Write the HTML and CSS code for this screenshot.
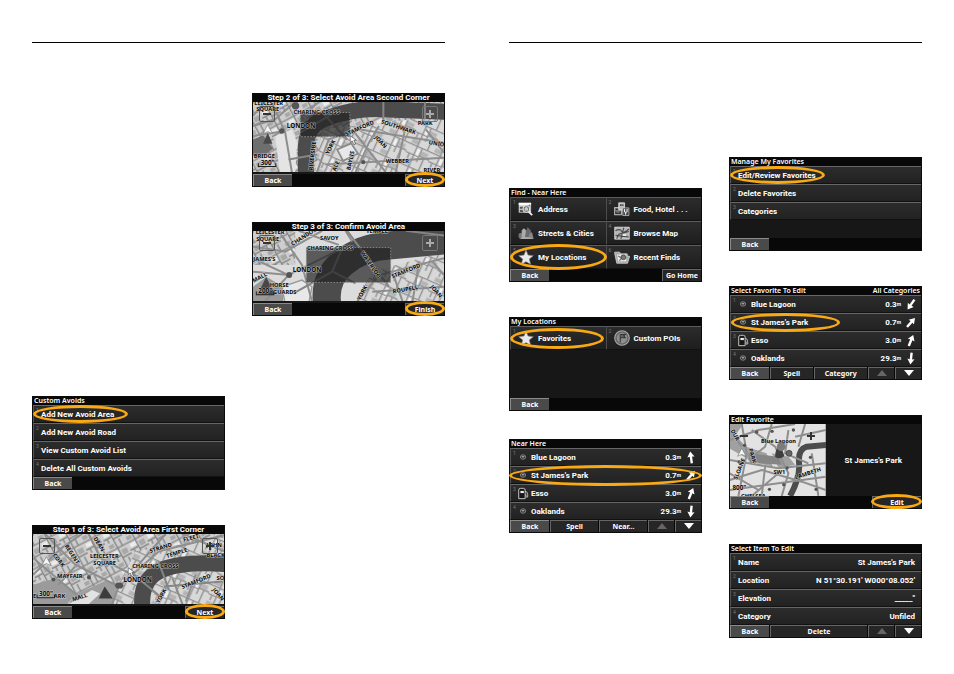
FILE: index.html
```html
<!DOCTYPE html>
<html lang="en">

<head>
    <meta charset="UTF-8">
    <meta name="viewport" content="width=device-width, initial-scale=1.0">
    <title>Custom Avoids and Favorites</title>
    <link rel="stylesheet" href="styles.css">
</head>

<body>

    <!-- shared map fills and icons -->
    <svg class="defs" aria-hidden="true">
        <defs>
            <pattern id="streets" width="74" height="66" patternUnits="userSpaceOnUse" patternTransform="rotate(24)">
                <rect width="74" height="66" fill="#d8d8d8" />
                <path d="M4 4h20v14H4zM44 30h22v12H44z" fill="#b5b5b5" />
                <path d="M28 28h12v26H28z" fill="#f0f0f0" />
                <path d="M0 22H74M0 50H42M26 0V66M42 22V66M58 0V22M12 50V66M42 46H74M58 46V66" fill="none" stroke="#8f8f8f" stroke-width="4" />
            </pattern>
            <pattern id="streets2" width="58" height="62" patternUnits="userSpaceOnUse" patternTransform="rotate(-28)">
                <rect width="58" height="62" fill="#cecece" />
                <path d="M6 6h16v12H6zM34 34h18v16H34z" fill="#a8a8a8" />
                <path d="M6 30h18v12H6z" fill="#ececec" />
                <path d="M0 24H58M28 0V62M0 48H28M44 0V24M28 56H58M12 48V62" fill="none" stroke="#858585" stroke-width="4" />
            </pattern>
        </defs>

        <symbol id="star" viewBox="0 0 24 24">
            <path d="M12 1l3 8 8 1-6 5 2 8-7-4-7 4 2-8-6-5 8-1z" fill="#e9e9e9" stroke="#777" />
        </symbol>
        <symbol id="pin" viewBox="0 0 18 18">
            <ellipse cx="9" cy="9" rx="6" ry="5" fill="#333" stroke="#888" stroke-width="2" />
            <path d="M6 8h6M9 7v4" stroke="#aaa" stroke-width="2" />
        </symbol>
        <symbol id="fuel" viewBox="0 0 28 28">
            <path d="M4 26V6q0-4 4-4h7q4 0 4 4v20z" fill="#161616" stroke="#ddd" stroke-width="2" />
            <path d="M8 8h8v5H8z" fill="#eee" />
            <path d="M19 9q6 0 6 8v5q-3 3-4-2v-4" fill="none" stroke="#ccc" stroke-width="2" />
        </symbol>
        <symbol id="arrow" viewBox="0 0 30 30">
            <path d="M15 0l9 14-6-1v17h-6V13l-6 1z" fill="#fff" />
        </symbol>
        <symbol id="up" viewBox="0 0 20 12">
            <path d="M10 0l10 12H0z" fill="#666" />
        </symbol>
        <symbol id="down" viewBox="0 0 20 12">
            <path d="M0 0h20L10 12z" fill="#fff" />
        </symbol>
        <symbol id="here" viewBox="0 0 40 60">
            <path d="M20 1L34 28 20 22 6 28z" fill="#f5f5f5" stroke="#777" stroke-width="2" />
            <path d="M20 26L34 58H6z" fill="#484848" />
        </symbol>
        <symbol id="north" viewBox="0 0 40 30">
            <path d="M20 1L34 28 20 22 6 28z" fill="#f5f5f5" stroke="#777" stroke-width="2" />
        </symbol>
        <symbol id="cursor" viewBox="0 0 24 30">
            <path d="M2 1v21l6-5 5 11 5-2-5-11h8z" fill="#fff" stroke="#444" stroke-width="2" />
        </symbol>

        <symbol id="address" viewBox="0 0 44 40">
            <path d="M2 3h34v27H2z" fill="#d5d5d5" />
            <path d="M2 3h34v6H2z" fill="#fff" />
            <path d="M5 14h9v5H5zM5 22h12v6H5z" fill="#555" />
            <path d="M20 12l14-5v19z" fill="#8b8b8b" />
            <path d="M29 27l10 10" stroke="#eee" stroke-width="5" />
            <circle cx="23" cy="20" r="9" fill="#666" stroke="#ddd" stroke-width="3" />
            <path d="M18 18l5-4 5 4v7H18z" fill="#c9c9c9" />
        </symbol>
        <symbol id="food" viewBox="0 0 44 40">
            <path d="M1 16h20v20H1z" fill="#777" stroke="#ddd" stroke-width="2" />
            <path d="M5 21h12M5 27v5h12v-8" fill="none" stroke="#333" stroke-width="3" />
            <path d="M13 3h16v20H13z" fill="#bbb" stroke="#eee" stroke-width="2" />
            <path d="M17 7h4v5h-4zM23 7h3v5h-3z" fill="#333" />
            <path d="M24 17h17v21H24z" fill="#444" stroke="#ccc" stroke-width="2" />
            <path d="M29 20v7q4 4 7 0v-7M32 28v8" fill="none" stroke="#eee" stroke-width="3" />
        </symbol>
        <symbol id="cities" viewBox="0 0 48 40">
            <path d="M2 34V22l6-3 5 4v13z" fill="#777" />
            <path d="M11 37V12l7-6 6 6v25z" fill="#aaa" />
            <path d="M20 38l4-24 5-11 9 9 3 26z" fill="#6a6a6a" />
            <path d="M30 38l5-17 7-3 5 20z" fill="#888" />
            <path d="M3 38q20-12 43 0z" fill="#aaa" />
        </symbol>
        <symbol id="map" viewBox="0 0 44 38">
            <path d="M2 3h40v33H2z" fill="#b5b5b5" stroke="#eee" stroke-width="2" />
            <path d="M4 13q12-7 17 1t20-6M8 35q1-13 12-15t21-5M27 4l-8 31M4 25l37 5" fill="none" stroke="#4a4a4a" stroke-width="3" />
            <path d="M24 22h9v5h-9z" fill="#eee" />
        </symbol>
        <symbol id="folder" viewBox="0 0 46 40">
            <path d="M2 6h14l4 5h18v6l7 1-6 20H8L2 10z" fill="#aaa" stroke="#e5e5e5" stroke-width="2" />
            <path d="M9 13h26v19H12z" fill="#eee" />
            <path d="M12 17q7 7 10 2t11 0M16 31q2-8 16-9" fill="none" stroke="#666" stroke-width="3" />
            <circle cx="27" cy="21" r="7" fill="#777" stroke="#333" stroke-width="2" />
        </symbol>
        <symbol id="poi" viewBox="0 0 46 46">
            <circle cx="23" cy="23" r="21" fill="#666" stroke="#aaa" stroke-width="3" />
            <circle cx="23" cy="23" r="15" fill="#8f8f8f" />
            <path d="M18 36V12M19 13h13l-4 4 4 5H19" fill="#666" stroke="#333" stroke-width="3" />
        </symbol>
    </svg>

    <main class="spread">

        <section class="page">
            <div class="column column-low">

                <article class="device">
                    <h2>Custom Avoids</h2>
                    <ul class="list">
                        <li><button class="row"><sup>1</sup>Add New Avoid Area</button><span class="ring ring-area"></span></li>
                        <li><button class="row"><sup>2</sup>Add New Avoid Road</button></li>
                        <li><button class="row"><sup>3</sup>View Custom Avoid List</button></li>
                        <li><button class="row"><sup>4</sup>Delete All Custom Avoids</button></li>
                    </ul>
                    <footer><button class="back">Back</button></footer>
                </article>

                <article class="device">
                    <h2 class="center">Step 1 of 3: Select Avoid Area First Corner</h2>
                    <div class="screen">
                        <svg class="map" viewBox="24 48 570 210" preserveAspectRatio="xMidYMid slice">
                            <path d="M24 48H594V258H24z" fill="url(#streets2)" />
                            <path d="M330 100L594 60V258H250z" fill="url(#streets)" />
                            <path d="M24 200l70-20 60 50-30 28H24z" fill="#9b9b9b" />
                            <path d="M150 230l90-42 35 12-10 58H130z" fill="#9e9e9e" />
                            <path d="M130 258l70-42 24 10-34 32z" fill="#e2e2e2" />
                            <path class="river" d="M350 262Q345 180 410 155Q470 130 600 138" />
                            <path class="road" d="M24 170L110 90 170 48M60 48L150 140 280 205 400 100 594 52M190 48L225 120 310 165M24 120L160 235M280 205L260 258M420 48L330 150M470 48L594 100M440 180L470 258M510 170L480 250M150 145L100 200" />
                            <path class="bridge" d="M325 170L410 240M398 130L430 215M415 205L590 190" />
                            <circle class="stop" cx="85" cy="184" r="6" /><circle class="stop" cx="191" cy="178" r="6" />
                            <path d="M273 194h16l6 8-6 9h-16l-5-9z" fill="#555" />
                            <use href="#north" x="44" y="112" width="40" height="36" />
                            <path d="M238 205l24 36h-42z" fill="#3c3c3c" />
                            <text x="194" y="121">LEICESTER</text>
                            <text x="204" y="140">SQUARE</text>
                            <text x="320" y="151">CHARING CROSS</text>
                            <text x="96" y="181">MAYFAIR</text>
                            <text class="city" x="294" y="193">LONDON</text>
                            <text transform="translate(374 105) rotate(-17)">STRAND</text>
                            <text transform="translate(424 120) rotate(-17)">TEMPLE</text>
                            <text transform="translate(474 72) rotate(-15)">FLEET</text>
                            <text x="542" y="86">JOHN</text>
                            <text x="542" y="118">BLACKFRIARS</text>
                            <text transform="translate(118 84) rotate(57)">REGENT</text>
                            <text transform="translate(82 112) rotate(52)">CORK</text>
                            <text transform="translate(204 62) rotate(58)">DEAN</text>
                            <text transform="translate(470 213) rotate(-22)">STAMFORD</text>
                            <text x="572" y="186">SOUTH</text>
                            <text transform="translate(558 216) rotate(48)">JOAN</text>
                            <text transform="translate(143 250) rotate(-18)">MALL</text>
                            <text x="24" y="241">E</text><text x="86" y="241">ARK</text>
                            <text transform="translate(400 256) rotate(-60)">YORK</text>
                            <use href="#cursor" x="306" y="148" width="24" height="30" />
                            <path class="scale" d="M36 229v10h52v-10" />
                            <text class="city" x="42" y="234">300"</text>
                        </svg>
                        <button class="zoom zoom-out" aria-label="Zoom out"></button>
                        <button class="zoom zoom-in" aria-label="Zoom in"></button>
                    </div>
                    <footer><button class="back">Back</button><button class="go">Next</button><span class="ring ring-go"></span></footer>
                </article>

            </div>
            <div class="column column-top">

                <article class="device">
                    <h2 class="center">Step 2 of 3: Select Avoid Area Second Corner</h2>
                    <div class="screen">
                        <svg class="map" viewBox="24 48 570 210" preserveAspectRatio="xMidYMid slice">
                            <path d="M24 48H594V258H24z" fill="url(#streets2)" />
                            <path d="M230 130L594 90V258H210z" fill="url(#streets)" />
                            <path d="M90 150l50-20 16 40-6 88H104z" fill="#e4e4e4" />
                            <path d="M24 160l30-12 30 40-34 24-26-4z" fill="#6e6e6e" />
                            <path d="M275 190l42-18 20 30-44 22z" fill="#e8e8e8" stroke="#888" stroke-width="5" />
                            <path class="river" d="M182 262V180Q185 112 250 95Q330 66 410 70L600 78" />
                            <path class="road" d="M24 120L90 100 150 48M80 48L120 140 140 258M120 135L24 150M215 258L250 160 340 130 594 170M320 130L420 258M400 120L370 170 330 258M480 120L450 258M540 130L594 200M240 235L594 215M60 48L24 90M220 48L175 90" />
                            <path class="bridge" d="M236 85L305 160M413 48V105M130 220L215 205M537 48V100M165 140L260 85" />
                            <path class="avoid" d="M165 80h148v72H165z" />
                            <circle class="stop" cx="110" cy="135" r="8" /><circle class="stop" cx="151" cy="60" r="11" /><circle class="stop" cx="353" cy="228" r="6" />
                            <use href="#here" x="48" y="115" width="40" height="60" />
                            <text x="28" y="57">LEICESTER</text>
                            <text x="34" y="75">SQUARE</text>
                            <text x="145" y="84">CHARING CROSS</text>
                            <text class="city" x="125" y="127">LONDON</text>
                            <text transform="translate(202 253) rotate(-83)">RIVERSIDE</text>
                            <text transform="translate(302 151) rotate(-24)">STAMFORD</text>
                            <text transform="translate(405 112) rotate(18)">SOUTHWARK</text>
                            <text transform="translate(386 155) rotate(48)">JOAN</text>
                            <text x="516" y="116">PARK</text>
                            <text transform="translate(250 206) rotate(-63)">YORK</text>
                            <text transform="translate(314 253) rotate(-77)">BAYLIS</text>
                            <text transform="translate(270 256) rotate(-65)">ALE</text>
                            <text x="420" y="232">WEBBER</text>
                            <text x="533" y="256">RIVER</text>
                            <text transform="translate(548 175) rotate(8)">UNION</text>
                            <text x="26" y="217">BRIDGE</text>
                            <path class="scale" d="M40 231v10h52v-10" />
                            <text class="city" x="47" y="236">300"</text>
                            <use href="#cursor" x="312" y="148" width="24" height="30" />
                        </svg>
                        <button class="zoom zoom-out" aria-label="Zoom out"></button>
                        <button class="zoom zoom-in light" aria-label="Zoom in"></button>
                    </div>
                    <footer><button class="back">Back</button><button class="go">Next</button><span class="ring ring-go"></span></footer>
                </article>

                <article class="device">
                    <h2 class="center">Step 3 of 3: Confirm Avoid Area</h2>
                    <div class="screen">
                        <svg class="map" viewBox="24 48 570 210" preserveAspectRatio="xMidYMid slice">
                            <path d="M24 48H594V258H24z" fill="#dcdcdc" />
                            <path d="M24 48H150V150H24z" fill="url(#streets2)" />
                            <path d="M380 170L594 110V258H330z" fill="url(#streets)" />
                            <path d="M110 215l60-20 30 20-10 50H120z" fill="#e8e8e8" stroke="#999" stroke-width="4" />
                            <path d="M24 215l40-30 50 30v43H24z" fill="#999" />
                            <path class="river wide" d="M245 264Q236 190 290 145Q350 96 430 92L600 76" />
                            <path class="road" d="M24 95L120 110 230 48M100 48L170 150 200 258M130 180L24 130M130 180L60 258M160 48L280 90M300 48L320 80M24 170L130 180 290 100M335 258L400 180 594 130M440 170L470 258M520 140L500 258M560 140L594 180M380 230L594 215" />
                            <path class="bridge" d="M305 48L430 215M262 170L330 205M150 232L260 170 290 100M480 48L594 62" />
                            <path class="avoid" d="M183 98h252v104H183z" />
                            <circle class="stop" cx="132" cy="180" r="9" />
                            <path d="M63 186l28 52H38z" fill="#484848" />
                            <text x="32" y="58">LEICESTER</text>
                            <text x="34" y="78">SQUARE</text>
                            <text transform="translate(142 93) rotate(-32)">CHANDOS</text>
                            <text x="224" y="76">SAVOY</text>
                            <text x="185" y="106">CHARING CROSS</text>
                            <text transform="translate(345 114) rotate(56)">WATERLOO</text>
                            <text x="25" y="138">JAMES'S</text>
                            <text class="city" x="143" y="170">LONDON</text>
                            <text transform="translate(26 203) rotate(-28)">MALL</text>
                            <text x="74" y="217">HORSE</text>
                            <text x="84" y="238">GUARDS</text>
                            <text transform="translate(440 190) rotate(-22)">STAMFORD</text>
                            <text transform="translate(442 235) rotate(-10)">ROUPELL</text>
                            <text transform="translate(552 216) rotate(48)">JOAN</text>
                            <text transform="translate(344 256) rotate(-62)">YORK</text>
                            <text x="362" y="56">TEMPLE</text>
                            <path class="scale" d="M34 229v10h52v-10" />
                            <text class="city" x="40" y="234">200"</text>
                        </svg>
                        <button class="zoom zoom-out" aria-label="Zoom out"></button>
                        <button class="zoom zoom-in light" aria-label="Zoom in"></button>
                    </div>
                    <footer><button class="back">Back</button><button class="go">Finish</button><span class="ring ring-go"></span></footer>
                </article>

            </div>
        </section>

        <section class="page">
            <div class="column column-find">

                <article class="device">
                    <h2>Find - Near Here</h2>
                    <div class="tiles">
                        <button class="tile"><sup>1</sup><svg><use href="#address" /></svg>Address</button>
                        <button class="tile"><sup>2</sup><svg><use href="#food" /></svg>Food, Hotel . . .</button>
                        <button class="tile"><sup>3</sup><svg><use href="#cities" /></svg>Streets &amp; Cities</button>
                        <button class="tile"><sup>4</sup><svg><use href="#map" /></svg>Browse Map</button>
                        <button class="tile"><sup>5</sup><svg><use href="#star" /></svg>My Locations<span class="ring ring-tile"></span></button>
                        <button class="tile"><sup>6</sup><svg><use href="#folder" /></svg>Recent Finds</button>
                    </div>
                    <footer><button class="back">Back</button><button class="go">Go Home</button></footer>
                </article>

                <article class="device">
                    <h2>My Locations</h2>
                    <div class="tiles">
                        <button class="tile"><sup>1</sup><svg><use href="#star" /></svg>Favorites<span class="ring ring-fav"></span></button>
                        <button class="tile"><sup>2</sup><svg><use href="#poi" /></svg>Custom POIs</button>
                    </div>
                    <footer><button class="back">Back</button></footer>
                </article>

                <article class="device near">
                    <h2>Near Here</h2>
                    <ul class="list">
                        <li><button class="row place"><sup>1</sup><svg><use href="#pin" /></svg>Blue Lagoon<span class="dist">0.3<small>m</small></span><svg class="n"><use href="#arrow" /></svg></button></li>
                        <li><button class="row place"><sup>2</sup><svg><use href="#pin" /></svg>St James's Park<span class="dist">0.7<small>m</small></span><svg class="ne"><use href="#arrow" /></svg></button><span class="ring ring-row"></span></li>
                        <li><button class="row place"><sup>3</sup><svg class="big"><use href="#fuel" /></svg>Esso<span class="dist">3.0<small>m</small></span><svg class="nne"><use href="#arrow" /></svg></button></li>
                        <li><button class="row place"><sup>4</sup><svg><use href="#pin" /></svg>Oaklands<span class="dist">29.3<small>m</small></span><svg class="s"><use href="#arrow" /></svg></button></li>
                    </ul>
                    <footer><button class="back">Back</button><button class="fill">Spell</button><button class="fill">Near...</button><button class="page-btn" disabled aria-label="Page up"><svg><use href="#up" /></svg></button><button class="page-btn" aria-label="Page down"><svg><use href="#down" /></svg></button></footer>
                </article>

            </div>
            <div class="column column-favorites">

                <article class="device">
                    <h2>Manage My Favorites</h2>
                    <ul class="list">
                        <li><button class="row"><sup>1</sup>Edit/Review Favorites</button><span class="ring ring-area"></span></li>
                        <li><button class="row"><sup>2</sup>Delete Favorites</button></li>
                        <li><button class="row"><sup>3</sup>Categories</button></li>
                    </ul>
                    <footer><button class="back">Back</button></footer>
                </article>

                <article class="device">
                    <h2>Select Favorite To Edit<span>All Categories</span></h2>
                    <ul class="list">
                        <li><button class="row place"><sup>1</sup><svg><use href="#pin" /></svg>Blue Lagoon<span class="dist">0.3<small>m</small></span><svg class="sw"><use href="#arrow" /></svg></button></li>
                        <li><button class="row place"><sup>2</sup><svg><use href="#pin" /></svg>St James's Park<span class="dist">0.7<small>m</small></span><svg class="ne"><use href="#arrow" /></svg></button><span class="ring ring-park"></span></li>
                        <li><button class="row place"><sup>3</sup><svg class="big"><use href="#fuel" /></svg>Esso<span class="dist">3.0<small>m</small></span><svg class="nne"><use href="#arrow" /></svg></button></li>
                        <li><button class="row place"><sup>4</sup><svg><use href="#pin" /></svg>Oaklands<span class="dist">29.3<small>m</small></span><svg class="s"><use href="#arrow" /></svg></button></li>
                    </ul>
                    <footer><button class="back">Back</button><button class="fill">Spell</button><button class="fill wide">Category</button><button class="page-btn" disabled aria-label="Page up"><svg><use href="#up" /></svg></button><button class="page-btn" aria-label="Page down"><svg><use href="#down" /></svg></button></footer>
                </article>

                <article class="device">
                    <h2>Edit Favorite</h2>
                    <div class="screen split">
                        <svg class="map" viewBox="24 42 288 216" preserveAspectRatio="xMidYMid slice">
                            <path d="M24 42H312V258H24z" fill="#e3e3e3" />
                            <path d="M24 60l50 50 60 20 20 40-60-14-70-40zM150 130l50 10 20 24-50 10zM24 42h40l-20 30-20 10z" fill="#a0a0a0" />
                            <path d="M80 130l90 10 10 24-96-6z" fill="#858585" />
                            <path class="river thin" d="M316 105L255 110Q228 118 232 160Q236 200 205 258" />
                            <path class="road" d="M24 90L110 60 220 42M60 42L75 130 50 258M24 150L170 175 312 160M90 60L160 110 200 190 180 258M24 210L120 180 240 215 312 240M130 170L120 258M200 60L190 130 260 160M250 42L230 110M270 130L290 258M24 190L110 240M24 240L312 200M150 42L130 110 80 150M220 80L312 60M60 110L24 60M170 190L90 258" />
                            <circle class="stop" cx="105" cy="66" r="5" /><circle class="stop" cx="151" cy="64" r="5" /><circle class="stop" cx="215" cy="60" r="5" /><circle class="stop" cx="68" cy="106" r="5" /><circle class="stop" cx="52" cy="156" r="5" /><circle class="stop" cx="196" cy="174" r="5" /><circle class="stop" cx="266" cy="142" r="5" /><circle class="stop" cx="186" cy="224" r="5" /><circle class="stop" cx="143" cy="238" r="5" /><circle class="stop" cx="283" cy="238" r="5" />
                            <use href="#north" x="42" y="112" width="36" height="30" />
                            <text x="118" y="99">Blue Lagoon</text>
                            <path d="M160 140q0-24 16-34l12 32q-14 12-28 2z" fill="#3e3e3e" />
                            <circle cx="178" cy="110" r="13" fill="#7c7c7c" />
                            <circle cx="202" cy="130" r="9" fill="#666" stroke="#333" stroke-width="2" />
                            <text transform="translate(80 118) rotate(72)">PARK</text>
                            <text transform="translate(46 210) rotate(-68)">SLOANE</text>
                            <text x="155" y="191">SW1</text>
                            <text transform="translate(222 208) rotate(-18)">LAMBETH</text>
                            <text transform="translate(26 62) rotate(60)">DUR</text>
                            <text x="58" y="264">CHELSEA</text>
                            <text class="city" x="32" y="241">800"</text>
                        </svg>
                        <button class="zoom zoom-out plain" aria-label="Zoom out"></button>
                        <button class="zoom zoom-in plain" aria-label="Zoom in"></button>
                        <p>St James's Park</p>
                    </div>
                    <footer><button class="back">Back</button><button class="go edit">Edit</button><span class="ring ring-edit"></span></footer>
                </article>

                <article class="device">
                    <h2>Select Item To Edit</h2>
                    <ul class="list">
                        <li><button class="row"><sup>1</sup>Name<span>St James's Park</span></button></li>
                        <li><button class="row"><sup>2</sup>Location<span>N 51°30.191' W000°08.052'</span></button></li>
                        <li><button class="row"><sup>3</sup>Elevation<span>_____"</span></button></li>
                        <li><button class="row"><sup>4</sup>Category<span>Unfiled</span></button></li>
                    </ul>
                    <footer><button class="back">Back</button><button class="fill">Delete</button><button class="page-btn" disabled aria-label="Page up"><svg><use href="#up" /></svg></button><button class="page-btn" aria-label="Page down"><svg><use href="#down" /></svg></button></footer>
                </article>

            </div>
        </section>

    </main>

</body>

</html>
```
FILE: styles.css
```css
* {
    box-sizing: border-box;
}

body {
    margin: 0;
    background-color: white;
    font-family: Roboto, "Noto Sans", sans-serif;
    font-size: 8px;
    font-weight: 700;
    color: white;
}

.defs {
    display: block;
    width: 0;
    height: 0;
}

.spread {
    display: grid;
    grid-template-columns: 1fr 1fr;
    gap: 64px;
    padding: 42px 32px 36px;
}

.page {
    display: grid;
    grid-template-columns: 1fr 1fr;
    gap: 27px;
    align-items: start;
    border-top: 1px solid black;
}

.column {
    display: flex;
    flex-direction: column;
    gap: 35px;
}

.column-low {
    padding-top: 353px;
}

.column-top {
    padding-top: 50px;
}

.column-find {
    padding-top: 145px;
}

.column-favorites {
    padding-top: 114px;
}

/* device screen */

.device {
    display: flex;
    flex-direction: column;
    height: 94px;
    background-color: #171717;
    border: 1px solid #0b0b0b;
}

.near {
    margin-top: -7px;
}

h2 {
    display: flex;
    justify-content: space-between;
    margin: 0;
    padding: 0 1px;
    font-family: "Noto Sans", sans-serif;
    font-size: 7px;
    font-weight: 600;
    line-height: 8px;
    background-color: #080808;
}

h2.center {
    justify-content: center;
    font-family: Roboto, "Noto Sans", sans-serif;
    font-size: 8px;
    font-weight: 700;
}

button {
    margin: 0;
    padding: 0;
    border: 0;
    background: none;
    font: inherit;
    color: white;
    white-space: nowrap;
}

sup {
    position: absolute;
    top: 2px;
    left: 2px;
    font-size: 5px;
    font-weight: 400;
    line-height: 5px;
    color: #777;
}

.list {
    margin: 0;
    padding: 0;
    list-style: none;
}

.list li {
    position: relative;
}

.row {
    position: relative;
    display: flex;
    align-items: center;
    justify-content: space-between;
    width: 100%;
    height: 18px;
    padding: 0 6px 0 7px;
    background: linear-gradient(#2c2c2c, #222);
    border-top: 1px solid #666;
    border-left: 1px solid #555;
    border-bottom: 1px solid #111;
}

.place {
    justify-content: flex-start;
    gap: 4px;
    padding: 0 4px 0 8px;
}

.place svg {
    width: 8px;
    height: 8px;
}

.place svg.big,
.place .dist + svg {
    width: 12px;
    height: 13px;
}

.place svg.big {
    margin: 0 -2px;
}

.dist {
    margin-left: auto;
}

.dist small {
    font-size: 5px;
    vertical-align: 1px;
}

.n {
    transform: rotate(-8deg);
}

.ne {
    transform: rotate(42deg);
}

.nne {
    transform: rotate(22deg);
}

.s {
    transform: rotate(186deg);
}

.sw {
    transform: rotate(215deg);
}

/* tiles with big icons */

.tiles {
    display: grid;
    grid-template-columns: 1fr 1fr;
}

.tile {
    position: relative;
    display: flex;
    align-items: center;
    gap: 4px;
    height: 24px;
    padding: 0 0 0 7px;
    background: linear-gradient(#2c2c2c, #1e1e1e);
    border-top: 1px solid #5c5c5c;
    border-left: 1px solid #4c4c4c;
    border-bottom: 1px solid #111;
}

.tile svg {
    width: 16px;
    height: 16px;
}

/* bottom bar */

footer {
    position: relative;
    display: flex;
    gap: 1px;
    height: 12px;
    margin-top: auto;
    font-family: "Noto Sans", sans-serif;
    font-size: 7px;
    background-color: #080808;
}

footer button {
    background-color: #262626;
    border-top: 1px solid #666;
    border-left: 1px solid #666;
    line-height: 10px;
}

.back {
    width: 39px;
    background-color: #4a4a4a;
    border-color: #8a8a8a;
}

.go {
    width: 39px;
    margin-left: auto;
}

.edit {
    width: 49px;
}

.fill {
    flex: 1;
}

.fill.wide {
    flex: 1 1 12px;
}

.page-btn {
    width: 26px;
}

.page-btn svg {
    width: 10px;
    height: 6px;
}

/* maps */

.screen {
    position: relative;
    height: 70px;
    overflow: hidden;
}

.map {
    display: block;
    width: 100%;
    height: 100%;
}

.split {
    display: grid;
    grid-template-columns: 1fr 1fr;
    height: 72px;
}

.split p {
    margin: 0;
    align-self: center;
    text-align: center;
    font-size: 8px;
}

.map text {
    font-family: "Noto Sans", sans-serif;
    font-size: 17px;
    font-weight: 700;
    fill: #080808;
    paint-order: stroke;
    stroke: #ddd;
    stroke-opacity: 0.7;
    stroke-width: 3px;
}

.map .city {
    font-size: 19px;
}

.river {
    fill: none;
    stroke: #4c4c4c;
    stroke-width: 48px;
}

.river.wide {
    stroke-width: 84px;
}

.river.thin {
    stroke-width: 18px;
}

.road {
    fill: none;
    stroke: #8e8e8e;
    stroke-width: 6px;
}

.bridge {
    fill: none;
    stroke: #858585;
    stroke-width: 6px;
}

.avoid {
    fill: #222;
    fill-opacity: 0.7;
    stroke: #aaa;
    stroke-width: 2px;
    stroke-dasharray: 5 4;
}

.stop {
    fill: #555;
}

.scale {
    fill: none;
    stroke: #222;
    stroke-width: 3px;
}

.zoom {
    position: absolute;
    top: 4px;
    width: 16px;
    height: 16px;
    border: 1px solid #555;
    border-radius: 2px;
    background: linear-gradient(#333, #333) center / 8px 2px no-repeat;
}

.zoom-out {
    left: 6px;
}

.zoom-in {
    right: 6px;
    background: linear-gradient(#333, #333) center / 8px 2px no-repeat, linear-gradient(#333, #333) center / 2px 8px no-repeat;
}

.light {
    border-color: #777;
    background: linear-gradient(#aaa, #aaa) center / 8px 2px no-repeat, linear-gradient(#aaa, #aaa) center / 2px 8px no-repeat;
}

.plain {
    border-color: transparent;
}

.zoom-in.plain {
    right: auto;
    left: 73px;
}

/* orange callouts */

.ring {
    position: absolute;
    z-index: 1;
    border: 3px solid #f9a913;
    border-radius: 50%;
    pointer-events: none;
}

.ring-area {
    top: 0;
    left: 0;
    width: 95px;
    height: 18px;
}

.ring-go {
    top: -2px;
    right: -1px;
    width: 40px;
    height: 15px;
}

.ring-edit {
    top: -2px;
    right: -1px;
    width: 51px;
    height: 15px;
}

.ring-tile {
    top: -2px;
    left: -1px;
    width: 97px;
    height: 26px;
}

.ring-fav {
    top: 1px;
    left: -1px;
    width: 94px;
    height: 21px;
}

.ring-row {
    top: -1px;
    left: -1px;
    right: -1px;
    height: 21px;
}

.ring-park {
    top: 0;
    left: 1px;
    width: 109px;
    height: 19px;
}
```
